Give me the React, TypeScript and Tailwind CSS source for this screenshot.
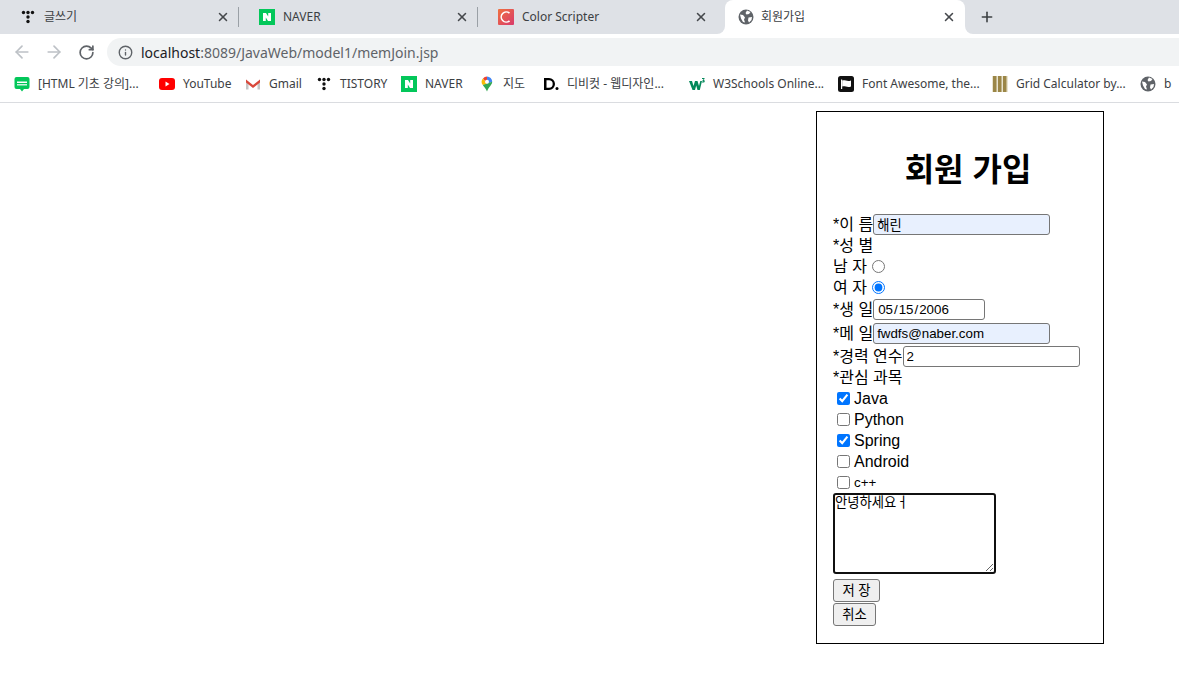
import React from 'react';
import { ArrowLeft, ArrowRight, RotateCw, Info, X, Plus } from 'lucide-react';

const Tistory = () => (
  <svg width="16" height="16" viewBox="0 0 16 16" fill="#111">
    <circle cx="3.5" cy="3.5" r="1.7" /><circle cx="8" cy="3.5" r="1.7" /><circle cx="12.5" cy="3.5" r="1.7" />
    <circle cx="8" cy="8" r="1.7" /><circle cx="8" cy="12.5" r="1.7" />
  </svg>
);

const Naver = () => (
  <svg width="16" height="16" viewBox="0 0 16 16">
    <rect width="16" height="16" fill="#03c75a" />
    <path d="M4 4h3l2.2 3.4V4H12v8H9L6.8 8.6V12H4z" fill="#fff" />
  </svg>
);

const ColorScripter = () => (
  <svg width="16" height="16" viewBox="0 0 16 16">
    <defs>
      <linearGradient id="cs" x1="0" y1="0" x2="1" y2="1">
        <stop offset="0" stopColor="#f0713f" />
        <stop offset="1" stopColor="#d83a6c" />
      </linearGradient>
    </defs>
    <rect width="16" height="16" rx="1" fill="url(#cs)" />
    <path d="M11.5 4.2A5 5 0 1 0 11.5 11.8" fill="none" stroke="#fff" strokeWidth="1.6" />
  </svg>
);

const Globe = () => (
  <svg width="16" height="16" viewBox="0 0 16 16">
    <circle cx="8" cy="8" r="7.5" fill="#5f6368" />
    <path d="M2 5.5l3 .5 2 2.5-1 2 1 3-2-.5L3 9.5zM9 1.5l3.5 1.5-1.5 2-2.5.5-1-1.5zM10.5 8.5l3.5-.5-.5 3-2.5 2.5-1-2z" fill="#fff" />
  </svg>
);

const Blog = () => (
  <svg width="16" height="16" viewBox="0 0 16 16">
    <path d="M2.5 1h11A2 2 0 0 1 15.500 3v8a2 2 0 0 1-2 2H10l-2 2.500L6 13H2.500a2 2 0 0 1-2-2V3a2 2 0 0 1 2-2z" fill="#03c75a" />
    <rect x="3" y="5.500" width="10" height="1.500" fill="#fff" />
    <rect x="3" y="8" width="10" height="1.500" fill="#fff" opacity="0.8" />
  </svg>
);

const YouTube = () => (
  <svg width="16" height="16" viewBox="0 0 16 16">
    <rect y="2" width="16" height="12" rx="3" fill="#f00" />
    <path d="M6.500 5.500v5l4-2.500z" fill="#fff" />
  </svg>
);

const Gmail = () => (
  <svg width="16" height="16" viewBox="0 0 16 16">
    <path d="M1 3.500v10h2.500V7z" fill="#c5c5c5" />
    <path d="M15 3.500v10h-2.500V7z" fill="#c5c5c5" />
    <path d="M1 3.500L8 9l7-5.500V6.500L8 12 1 6.500z" fill="#d9483b" />
  </svg>
);

const Maps = () => (
  <svg width="16" height="16" viewBox="0 0 16 16">
    <path d="M8 0.500A5.200 5.200 0 0 1 13.200 5.700L8 8z" fill="#4285f4" />
    <path d="M8 0.500A5.200 5.200 0 0 0 4 2.400L8 8z" fill="#ea4335" />
    <path d="M4 2.400A5.200 5.200 0 0 0 3.800 9L8 8z" fill="#fbbc04" />
    <path d="M13.200 5.700C13.200 9 9.500 11 8 15.500 7.200 13 5 11 3.800 9z" fill="#34a853" />
    <circle cx="8" cy="5.700" r="2" fill="#fff" />
  </svg>
);

const Dbcut = () => (
  <svg width="16" height="16" viewBox="0 0 16 16">
    <path fillRule="evenodd" d="M1 2h5a6 6 0 0 1 0 12H1zM3.500 4.300v7.400H6a3.700 3.700 0 0 0 0-7.400z" fill="#000" />
    <circle cx="14" cy="12.500" r="1.500" fill="#000" />
  </svg>
);

const W3 = () => (
  <svg width="16" height="16" viewBox="0 0 16 16">
    <path d="M0 5h3l1.500 5L6 5h2.500L10 10l1.300-5H13l-2.200 9H8.500L7.200 9.500 6 14H3.500z" fill="#04885a" />
    <path d="M13 2h2.500v1L14.500 4a1 1 0 0 1 0 2.500H13V5.500h1.200V5H13.500V4.500L14.500 3H13z" fill="#04885a" />
  </svg>
);

const FontAwesome = () => (
  <svg width="16" height="16" viewBox="0 0 16 16">
    <rect width="16" height="16" rx="2.500" fill="#111" />
    <path d="M3 3.500h1.200V13H3z" fill="#fff" />
    <path d="M4.200 4.500C7 3.500 9 6 13 4.500v6C9 12 7 9.500 4.200 10.500z" fill="#fff" />
  </svg>
);

const GridCalc = () => (
  <svg width="16" height="16" viewBox="0 0 16 16">
    <rect width="16" height="16" fill="#e9e4d0" />
    <rect x="1" width="3.500" height="16" fill="#9b8647" />
    <rect x="6" width="3.500" height="16" fill="#9b8647" />
    <rect x="11" width="3.500" height="16" fill="#9b8647" />
  </svg>
);

const tabs = [
  { icon: <Tistory />, title: '글쓰기' },
  { icon: <Naver />, title: 'NAVER' },
  { icon: <ColorScripter />, title: 'Color Scripter' },
];

const bookmarks = [
  { icon: <Blog />, label: '[HTML 기초 강의]...', width: 'w-[105px]' },
  { icon: <YouTube />, label: 'YouTube', width: 'w-[46px]' },
  { icon: <Gmail />, label: 'Gmail', width: 'w-[31px]' },
  { icon: <Tistory />, label: 'TISTORY', width: 'w-[45px]' },
  { icon: <Naver />, label: 'NAVER', width: 'w-[38px]' },
  { icon: <Maps />, label: '지도', width: 'w-[24px]' },
  { icon: <Dbcut />, label: '디비컷 - 웹디자인...', width: 'w-[106px]' },
  { icon: <W3 />, label: 'W3Schools Online...', width: 'w-[109px]' },
  { icon: <FontAwesome />, label: 'Font Awesome, the...', width: 'w-[114px]' },
  { icon: <GridCalc />, label: 'Grid Calculator by...', width: 'w-[108px]' },
  { icon: <Globe />, label: 'b', width: 'w-[12px]' },
];

const subjects = [
  { name: 'Java', checked: true },
  { name: 'Python', checked: false },
  { name: 'Spring', checked: true },
  { name: 'Android', checked: false },
];

const inputCls =
  'h-[21px] border border-[#767676] rounded-[3px] px-[3px] text-[13.33px] leading-none text-black outline-none';

const Row = ({ className, children }: { className: string; children: React.ReactNode }) => (
  <div className={`flex items-center whitespace-pre text-[16px] leading-[21px] ${className}`}>{children}</div>
);

const App = () => {
  return (
    <div className="h-[700px] w-[1179px] overflow-hidden bg-white font-['Noto_Sans','Noto_Sans_CJK_KR',sans-serif]">
      {/* tab strip */}
      <div className="flex h-[34px] bg-[linear-gradient(#dee1e6_50%,#ffffff_50%)]">
        <div className="flex w-[725px] rounded-br-lg bg-[#dee1e6] pl-2">
          {tabs.map((t, i) => (
            <div key={t.title} className="flex w-[239px] items-center pl-3 pr-2 text-[12px] text-[#3c4043]">
              {t.icon}
              <span className="ml-2 flex-1 font-['Noto_Sans','Noto_Sans_CJK_KR',sans-serif]">{t.title}</span>
              <X size={14} strokeWidth={2.6} className="text-[#45484c]" />
              {i < 2 ? <span className="ml-2 h-5 w-px bg-[#9aa0a6]" /> : <span className="ml-2 w-px" />}
            </div>
          ))}
        </div>
        <div className="flex w-[240px] items-center rounded-t-lg bg-white pl-[13px] pr-[9px] text-[12px] text-[#3c4043]">
          <Globe />
          <span className="ml-[7px] flex-1">회원가입</span>
          <X size={14} strokeWidth={2.6} className="text-[#45484c]" />
        </div>
        <div className="flex flex-1 items-center rounded-bl-lg bg-[#dee1e6] pl-[14px]">
          <Plus size={16} strokeWidth={2.4} className="text-[#3c4043]" />
        </div>
      </div>

      {/* toolbar */}
      <div className="flex h-[32px] items-end bg-white pl-3">
        <div className="flex h-[28px] items-center gap-3">
          <ArrowLeft size={20} className="text-[#bdc1c6]" />
          <ArrowRight size={20} className="text-[#bdc1c6]" />
          <RotateCw size={17} strokeWidth={2.4} className="ml-[2px] text-[#5f6368]" />
        </div>
        <div className="ml-[12px] flex h-[28px] flex-1 items-center rounded-l-full bg-[#f1f3f4] pl-[11px] text-[14px]">
          <Info size={15} strokeWidth={2.2} className="text-[#5f6368]" />
          <span className="ml-[8px] text-[#202124]">
            localhost<span className="text-[#5f6368]">:8089/JavaWeb/model1/memJoin.jsp</span>
          </span>
        </div>
      </div>

      {/* bookmarks */}
      <div className="flex h-[37px] items-center gap-4 overflow-hidden border-b border-[#dadce0] bg-white pl-[14px] text-[12px] text-[#3c4043]">
        {bookmarks.map((b) => (
          <div key={b.label} className="flex shrink-0 items-center gap-2">
            {b.icon}
            <span className={`whitespace-pre ${b.width}`}>{b.label}</span>
          </div>
        ))}
      </div>

      {/* page */}
      <div className="flex justify-end pr-[75px] pt-2 font-['Liberation_Sans','Noto_Sans_CJK_KR',sans-serif] text-black">
        <form className="h-[533px] w-[288px] border border-black pl-4 pt-[37px]">
          <h1 className="mb-[22px] h-[43px] text-center text-[32px] font-bold leading-[43px]">회원 가입</h1>

          <Row className="h-[21px]">
            <span>*이 름</span>
            <input readOnly defaultValue="해린" className={`${inputCls} w-[177px] bg-[#e8f0fe]`} />
          </Row>
          <Row className="h-[21px]">
            <span>*성 별</span>
          </Row>
          <Row className="h-[21px]">
            <span>남 자</span>
            <input readOnly type="radio" name="gender" className="ml-[5px] size-[13px]" />
          </Row>
          <Row className="h-[21px]">
            <span>여 자</span>
            <input readOnly type="radio" name="gender" defaultChecked className="ml-[5px] size-[13px]" />
          </Row>
          <Row className="mt-[1px] h-[21px]">
            <span>*생 일</span>
            <input readOnly type="date" defaultValue="2006-05-15" className={`${inputCls} w-[112px]`} />
          </Row>
          <Row className="mt-[3px] h-[21px]">
            <span>*메 일</span>
            <input readOnly defaultValue="fwdfs@naber.com" className={`${inputCls} w-[177px] bg-[#e8f0fe]`} />
          </Row>
          <Row className="mt-[2px] h-[21px]">
            <span>*경력 연수</span>
            <input readOnly type="number" defaultValue="2" className={`${inputCls} w-[177px]`} />
          </Row>
          <Row className="h-[21px]">
            <span>*관심 과목</span>
          </Row>

          {subjects.map((s) => (
            <Row key={s.name} className="h-[21px]">
              <input readOnly type="checkbox" defaultChecked={s.checked} className="ml-1 mr-[4px] size-[13px]" />
              <span>{s.name}</span>
            </Row>
          ))}
          <Row className="h-[21px]">
            <input readOnly type="checkbox" className="ml-1 mr-[4px] size-[13px]" />
            <span className="text-[13.33px]">c++</span>
          </Row>

          <textarea
            readOnly
            defaultValue="안녕하세요ㅓ"
            className="block h-[81px] w-[163px] rounded-[3px] border-2 border-[#101010] px-0 py-0 text-[13.33px] leading-[16px] outline-none"
          />

          <div className="mt-[5px] flex flex-col items-start">
            <button type="button" className="h-[23px] w-[47px] rounded-[3px] border border-[#767676] bg-[#efefef] text-[13.33px] leading-none">
              저 장
            </button>
            <button type="button" className="mt-[1px] h-[23px] w-[43px] rounded-[3px] border border-[#767676] bg-[#efefef] text-[13.33px] leading-none">
              취소
            </button>
          </div>
        </form>
      </div>
    </div>
  );
};

export default App;
